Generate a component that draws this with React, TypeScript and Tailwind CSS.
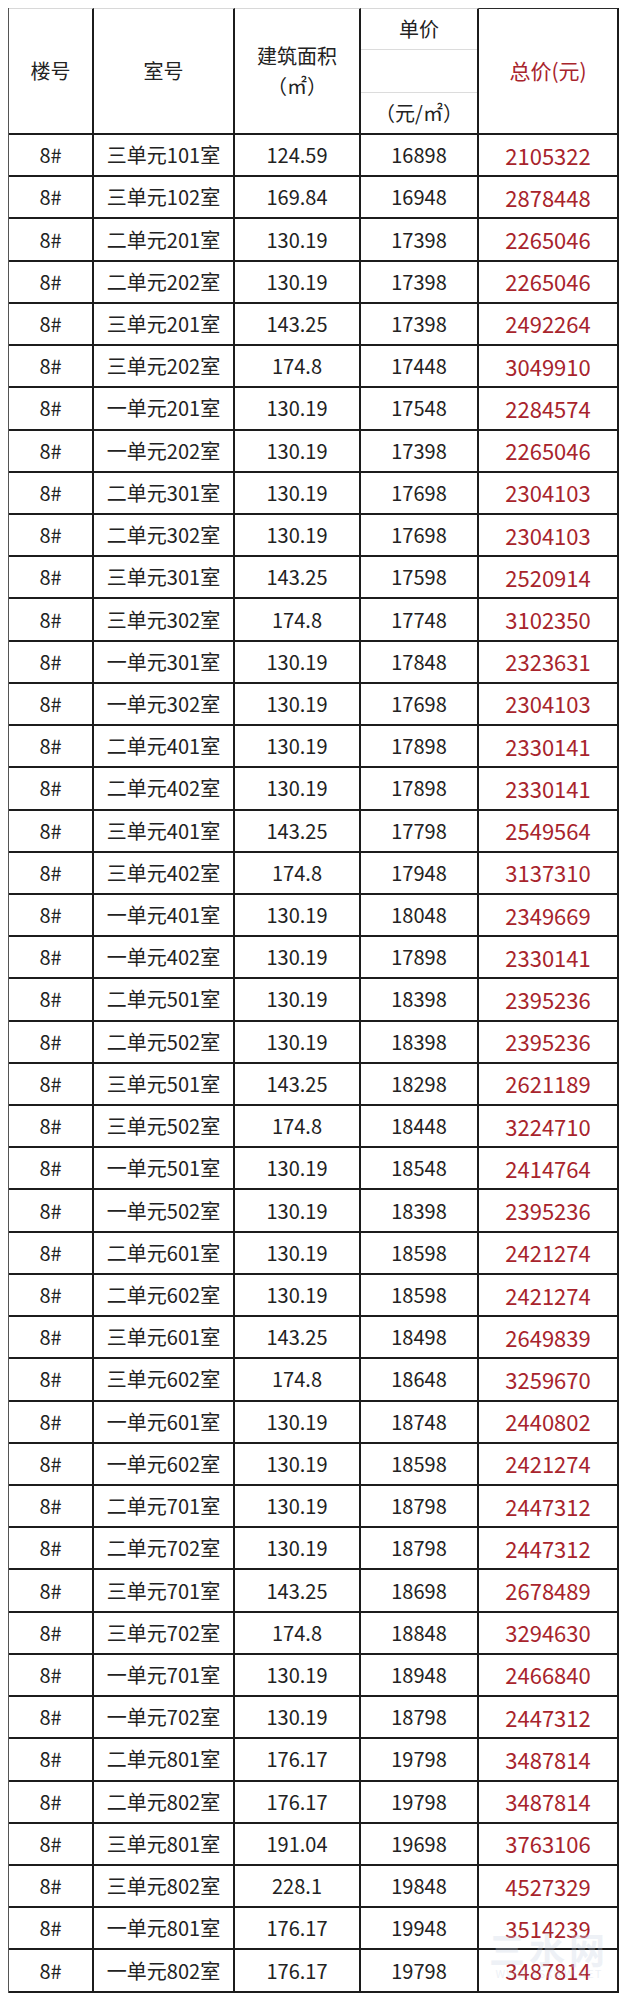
import React from "react";

type Row = [string, string, string, string];

const rows: Row[] = [
  ["三单元101室", "124.59", "16898", "2105322"],
  ["三单元102室", "169.84", "16948", "2878448"],
  ["二单元201室", "130.19", "17398", "2265046"],
  ["二单元202室", "130.19", "17398", "2265046"],
  ["三单元201室", "143.25", "17398", "2492264"],
  ["三单元202室", "174.8", "17448", "3049910"],
  ["一单元201室", "130.19", "17548", "2284574"],
  ["一单元202室", "130.19", "17398", "2265046"],
  ["二单元301室", "130.19", "17698", "2304103"],
  ["二单元302室", "130.19", "17698", "2304103"],
  ["三单元301室", "143.25", "17598", "2520914"],
  ["三单元302室", "174.8", "17748", "3102350"],
  ["一单元301室", "130.19", "17848", "2323631"],
  ["一单元302室", "130.19", "17698", "2304103"],
  ["二单元401室", "130.19", "17898", "2330141"],
  ["二单元402室", "130.19", "17898", "2330141"],
  ["三单元401室", "143.25", "17798", "2549564"],
  ["三单元402室", "174.8", "17948", "3137310"],
  ["一单元401室", "130.19", "18048", "2349669"],
  ["一单元402室", "130.19", "17898", "2330141"],
  ["二单元501室", "130.19", "18398", "2395236"],
  ["二单元502室", "130.19", "18398", "2395236"],
  ["三单元501室", "143.25", "18298", "2621189"],
  ["三单元502室", "174.8", "18448", "3224710"],
  ["一单元501室", "130.19", "18548", "2414764"],
  ["一单元502室", "130.19", "18398", "2395236"],
  ["二单元601室", "130.19", "18598", "2421274"],
  ["二单元602室", "130.19", "18598", "2421274"],
  ["三单元601室", "143.25", "18498", "2649839"],
  ["三单元602室", "174.8", "18648", "3259670"],
  ["一单元601室", "130.19", "18748", "2440802"],
  ["一单元602室", "130.19", "18598", "2421274"],
  ["二单元701室", "130.19", "18798", "2447312"],
  ["二单元702室", "130.19", "18798", "2447312"],
  ["三单元701室", "143.25", "18698", "2678489"],
  ["三单元702室", "174.8", "18848", "3294630"],
  ["一单元701室", "130.19", "18948", "2466840"],
  ["一单元702室", "130.19", "18798", "2447312"],
  ["二单元801室", "176.17", "19798", "3487814"],
  ["二单元802室", "176.17", "19798", "3487814"],
  ["三单元801室", "191.04", "19698", "3763106"],
  ["三单元802室", "228.1", "19848", "4527329"],
  ["一单元801室", "176.17", "19948", "3514239"],
  ["一单元802室", "176.17", "19798", "3487814"],
];

const cols = "grid grid-cols-[85px_141px_126px_118px_140px]";
const cell =
  "flex items-center justify-center border-r-2 border-b-2 border-[#1c1c1c]";

export default function App() {
  return (
    <div
      className="min-h-[2001px] bg-white pl-[8px] pt-[8px] text-[#222]"
      style={{ fontFamily: '"Noto Sans CJK SC", "Noto Sans", sans-serif' }}
    >
      <div className="relative w-[611px] border-l border-[#555]">
        {/* header */}
        <div className={`${cols} h-[127px] text-[20px]`}>
          <div className={`${cell} border-t border-t-[#d8d8d8]`}>楼号</div>
          <div className={`${cell} border-t border-t-[#d8d8d8]`}>室号</div>
          <div
            className={`${cell} flex-col gap-[4px] border-t border-t-[#d8d8d8] leading-[26px]`}
          >
            <span>建筑面积</span>
            <span>（㎡）</span>
          </div>
          <div className="flex flex-col border-r-2 border-b-2 border-[#1c1c1c] border-t border-t-[#d8d8d8]">
            <div className="flex h-[41px] items-center justify-center border-b border-[#dcdcdc]">
              单价
            </div>
            <div className="h-[43px] border-b border-[#dcdcdc]" />
            <div className="flex flex-1 items-center justify-center">
              （元/㎡）
            </div>
          </div>
          <div
            className={`${cell} border-t border-t-[#2a2a2a] text-[21px] text-[#a8242c]`}
          >
            总价(元)
          </div>
        </div>

        {/* body */}
        {rows.map(([room, area, price, total], i) => (
          <div key={i} className={`${cols} h-[42.23px] text-[20px]`}>
            <div className={cell}>8#</div>
            <div className={cell}>{room}</div>
            <div className={cell}>{area}</div>
            <div className={cell}>{price}</div>
            <div className={`${cell} text-[22px] text-[#a8242c]`}>{total}</div>
          </div>
        ))}

        {/* watermark */}
        <div className="pointer-events-none absolute bottom-[14px] right-[10px] flex flex-col items-center leading-none text-[#c8d3e3] opacity-30">
          <span className="text-[36px] font-bold tracking-[4px]">三水网</span>
          <span className="mt-[2px] text-[11px] tracking-[1px]">
            WWW.SSXWW.NET
          </span>
        </div>
      </div>
    </div>
  );
}
